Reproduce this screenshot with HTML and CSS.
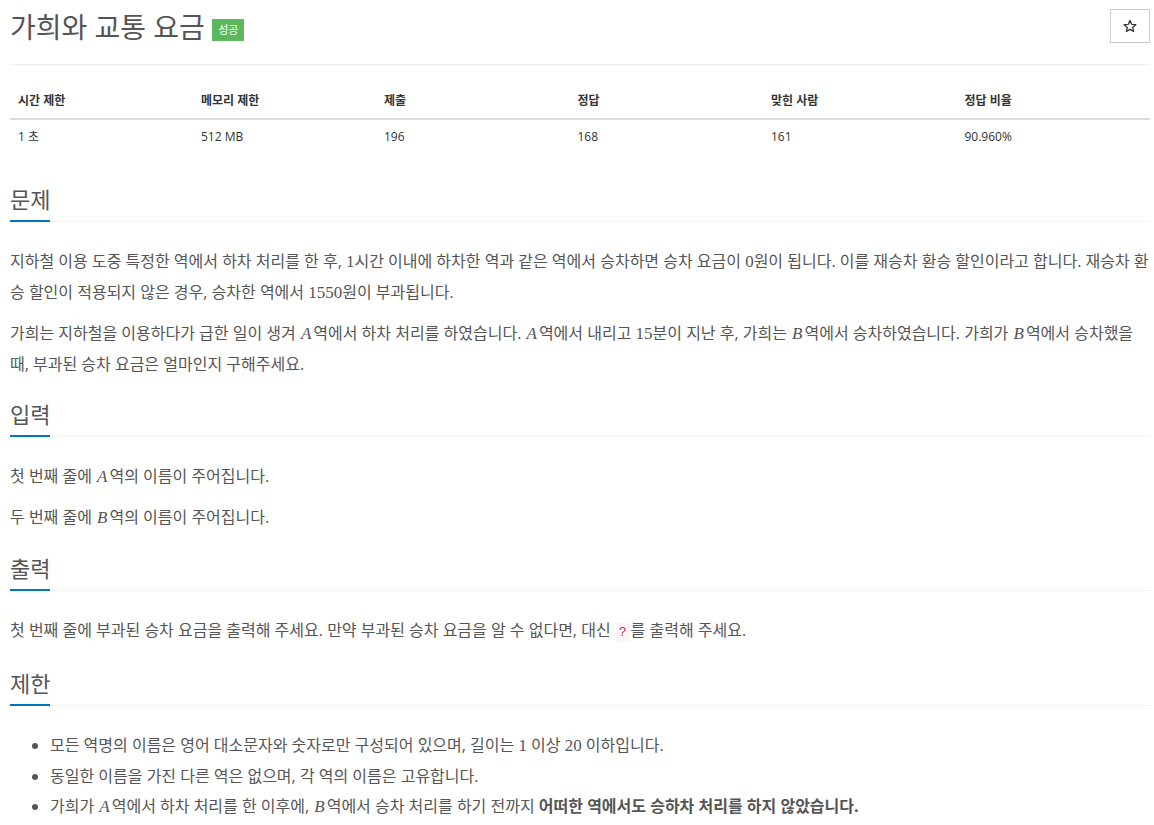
FILE: index.html
```html
<!DOCTYPE html>
<html lang="ko">
<head>
    <meta charset="UTF-8">
    <title>가희와 교통 요금</title>
    <link rel="stylesheet" href="styles.css">
</head>
<body>
    <div class="page">
        <div class="title-row">
            <h1 class="title">가희와 교통 요금 <span class="badge">성공</span></h1>
            <button class="star" title="즐겨찾기">
                <svg width="14" height="14" viewBox="0 0 24 24"><path d="M12 2.5l2.9 6.6 7.1.6-5.4 4.7 1.6 7-6.2-3.7-6.2 3.7 1.6-7L2 9.7l7.1-.6z" fill="none" stroke="#333" stroke-width="2.2" stroke-linejoin="round"/></svg>
            </button>
        </div>

        <table class="info">
            <thead>
                <tr>
                    <th class="w16">시간 제한</th>
                    <th class="w16">메모리 제한</th>
                    <th class="w17">제출</th>
                    <th class="w17">정답</th>
                    <th class="w17">맞힌 사람</th>
                    <th class="w17">정답 비율</th>
                </tr>
            </thead>
            <tbody>
                <tr>
                    <td>1 초</td>
                    <td>512 MB</td>
                    <td>196</td>
                    <td>168</td>
                    <td>161</td>
                    <td>90.960%</td>
                </tr>
            </tbody>
        </table>

        <section class="headline">
            <h2><span>문제</span></h2>
            <div class="text">
                <p>지하철 이용 도중 특정한 역에서 하차 처리를 한 후, <span class="m">1</span>시간 이내에 하차한 역과 같은 역에서 승차하면 승차 요금이 <span class="m">0</span>원이 됩니다. 이를 재승차 환승 할인이라고 합니다. 재승차 환승 할인이 적용되지 않은 경우, 승차한 역에서 <span class="m">1550</span>원이 부과됩니다.</p>
                <p>가희는 지하철을 이용하다가 급한 일이 생겨 <span class="m mi">A</span>역에서 하차 처리를 하였습니다. <span class="m mi">A</span>역에서 내리고 <span class="m">15</span>분이 지난 후, 가희는 <span class="m mi">B</span>역에서 승차하였습니다. 가희가 <span class="m mi">B</span>역에서 승차했을 때, 부과된 승차 요금은 얼마인지 구해주세요.</p>
            </div>
        </section>

        <section class="headline">
            <h2><span>입력</span></h2>
            <div class="text">
                <p>첫 번째 줄에 <span class="m mi">A</span>역의 이름이 주어집니다.</p>
                <p>두 번째 줄에 <span class="m mi">B</span>역의 이름이 주어집니다.</p>
            </div>
        </section>

        <section class="headline">
            <h2><span>출력</span></h2>
            <div class="text">
                <p>첫 번째 줄에 부과된 승차 요금을 출력해 주세요. 만약 부과된 승차 요금을 알 수 없다면, 대신 <code>?</code>를 출력해 주세요.</p>
            </div>
        </section>

        <section class="headline">
            <h2><span>제한</span></h2>
            <div class="text">
                <ul>
                    <li>모든 역명의 이름은 영어 대소문자와 숫자로만 구성되어 있으며, 길이는 <span class="m">1</span> 이상 <span class="m">20</span> 이하입니다.</li>
                    <li>동일한 이름을 가진 다른 역은 없으며, 각 역의 이름은 고유합니다.</li>
                    <li>가희가 <span class="m mi">A</span>역에서 하차 처리를 한 이후에, <span class="m mi">B</span>역에서 승차 처리를 하기 전까지 <strong>어떠한 역에서도 승하차 처리를 하지 않았습니다.</strong></li>
                </ul>
            </div>
        </section>
    </div>
</body>
</html>
```

FILE: styles.css
```css
body {
    margin: 0;
    padding: 0;
    font-family: "Open Sans", "Noto Sans CJK KR", sans-serif;
    color: #555;
    background-color: #fff;
}

.page {
    padding: 0 4px 0 10px;
}

.title-row {
    display: flex;
    justify-content: space-between;
    align-items: flex-start;
    padding-top: 9px;
    padding-bottom: 19px;
    border-bottom: 1px solid #eee;
}

.title {
    margin: 0;
    font-size: 28px;
    font-weight: 400;
    line-height: 36px;
    color: #555;
}

.badge {
    display: inline-block;
    vertical-align: 4px;
    padding: 0 6px;
    font-size: 11px;
    line-height: 22px;
    color: #fff;
    background-color: #5cb85c;
}

.star {
    display: flex;
    align-items: center;
    justify-content: center;
    width: 40px;
    height: 34px;
    padding: 0;
    background-color: #fff;
    border: 1px solid #ccc;
    cursor: pointer;
}

.info {
    width: 100%;
    margin-top: 19px;
    margin-bottom: 30px;
    border-collapse: collapse;
    table-layout: fixed;
    font-size: 12px;
    color: #333;
}

.info .w16 {
    width: 16%;
}

.info .w17 {
    width: 17%;
}

.info th,
.info td {
    padding: 8px;
    text-align: left;
    line-height: 18px;
}

.info th {
    font-weight: 700;
    border-bottom: 2px solid #ddd;
}

.headline {
    margin-top: 20px;
}

.headline h2 {
    margin: 0;
    font-size: 22px;
    font-weight: 400;
    line-height: 30px;
    border-bottom: 1px dotted #e4e9f0;
}

.headline h2 span {
    display: inline-block;
    padding-bottom: 6px;
    margin-bottom: -1px;
    border-bottom: 2px solid #0076c0;
}

.text {
    padding-top: 24px;
    font-size: 16px;
    line-height: 30px;
}

.text p {
    margin: 0 0 10px;
}

.text ul {
    margin: 0;
    padding-left: 40px;
}

.m {
    font-family: "Liberation Serif", serif;
    font-size: 17px;
}

.mi {
    padding: 0 2px 0 1px;
    font-style: italic;
}

code {
    padding: 2px 3px;
    margin: 0 1px;
    font-family: "Liberation Mono", monospace;
    font-size: 13px;
    color: #c7254e;
    background-color: #fbf5f7;
}

strong {
    font-weight: 700;
}
```
